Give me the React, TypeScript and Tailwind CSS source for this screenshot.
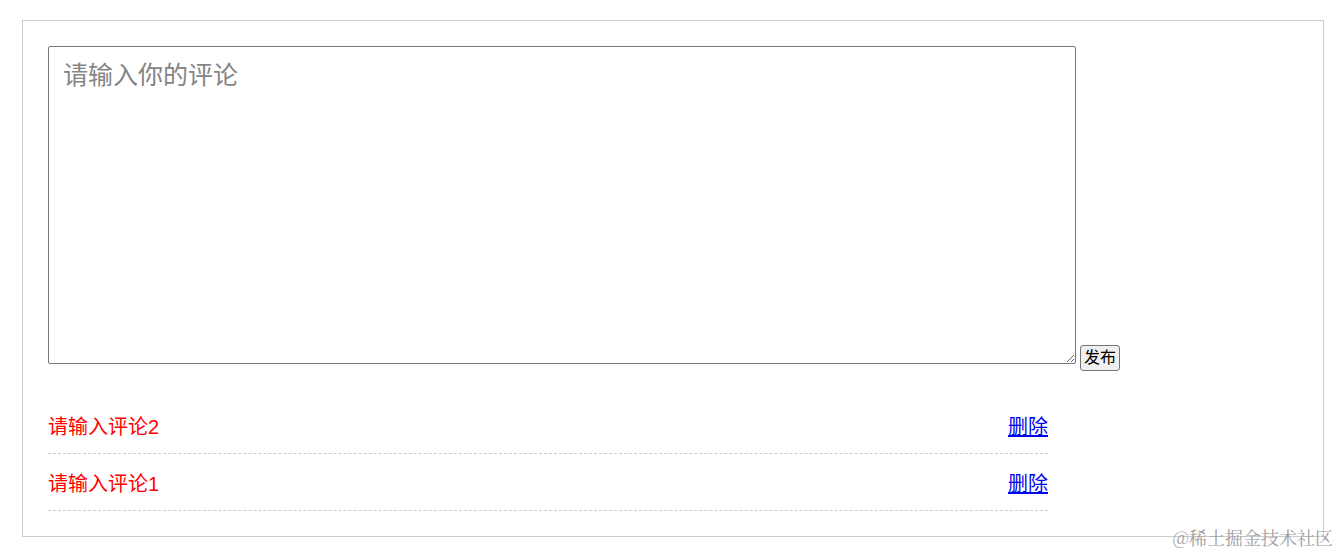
import { useState } from 'react';

interface Comment {
  id: number;
  text: string;
}

const fontStack = "font-['Liberation_Sans','Noto_Sans_CJK_SC',sans-serif]";

export default function App() {
  const [value, setValue] = useState('');
  const [comments, setComments] = useState<Comment[]>([
    { id: 2, text: '请输入评论2' },
    { id: 1, text: '请输入评论1' },
  ]);

  const handlePublish = () => {
    if (!value.trim()) return;
    setComments((prev) => [{ id: Date.now(), text: value }, ...prev]);
    setValue('');
  };

  return (
    <div className={`relative min-h-[554px] bg-white pt-[20px] pl-[22px] ${fontStack}`}>
      {/* Comment box */}
      <div className="w-[1302px] h-[517px] border border-[#cccccc] p-[25px]">
        <div className="flex items-end">
          <textarea
            value={value}
            onChange={(e) => setValue(e.target.value)}
            placeholder="请输入你的评论"
            className="w-[1028px] h-[318px] border border-[#767676] rounded-[2px] px-[14px] py-[13px] text-[25px] leading-[30px] text-[#333] placeholder:text-[#858585] outline-none"
          ></textarea>
          <button
            onClick={handlePublish}
            className="ml-[4px] mb-[-7px] h-[26px] px-[3px] bg-[#efefef] border border-[#767676] rounded-[3px] text-[16px] leading-[22px] text-black"
          >
            发布
          </button>
        </div>

        {/* Comment list */}
        <ul className="mt-[33px] w-[1000px]">
          {comments.map((c) => (
            <li
              key={c.id}
              className="flex items-center justify-between h-[57px] pt-[3px] border-b border-dashed border-[#cccccc] text-[20px]"
            >
              <span className="text-[#ff0000]">{c.text}</span>
              <a
                href="#"
                onClick={(e) => {
                  e.preventDefault();
                  setComments((prev) => prev.filter((x) => x.id !== c.id));
                }}
                className="text-[#0000ee] underline"
              >
                删除
              </a>
            </li>
          ))}
        </ul>
      </div>

      {/* Watermark */}
      <span className="absolute right-[6px] top-[525px] text-[18px] leading-[24px] text-[#a0a0a0] font-['Noto_Serif_CJK_SC','Noto_Sans_CJK_SC',serif]">
        @稀土掘金技术社区
      </span>
    </div>
  );
}
